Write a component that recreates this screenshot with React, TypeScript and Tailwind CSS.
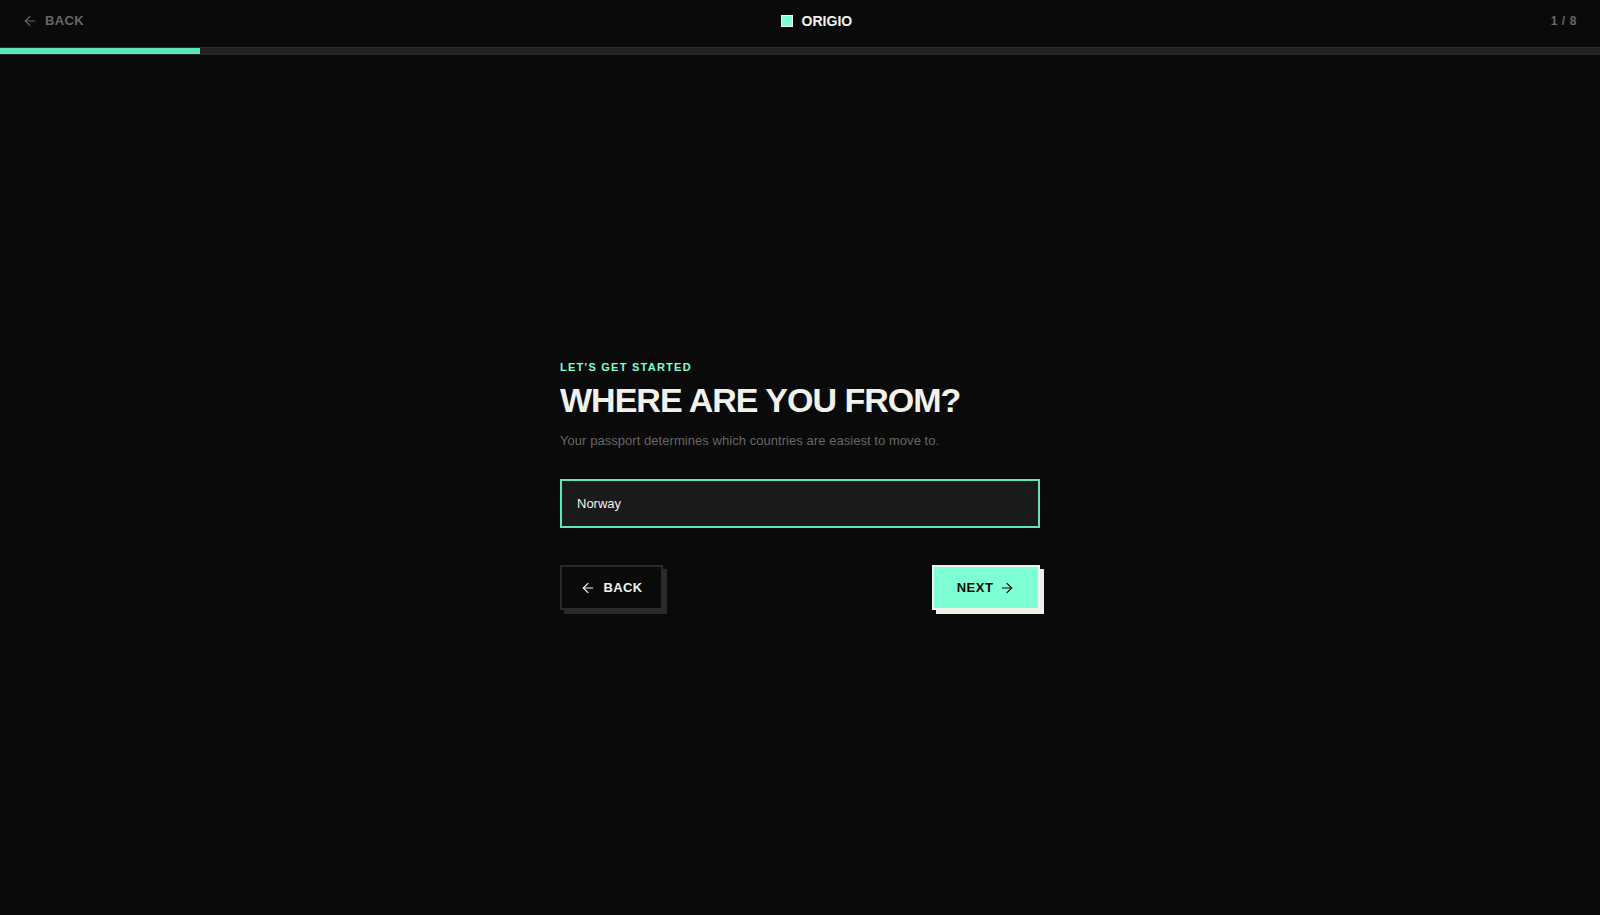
import React from 'react';
import { ArrowLeft, ArrowRight } from 'lucide-react';

const App: React.FC = () => {
  return (
    <div className="flex h-[915px] w-full flex-col bg-[#0a0a0a] font-['Liberation_Sans',Arial,sans-serif] text-[#f2f2ec]">
      <header className="flex h-[47px] shrink-0 items-center justify-between pb-[6px] pl-[22px] pr-[23px]">
        <button className="flex items-center gap-[7px] text-[13px] font-bold tracking-[0.4px] text-[#666666]">
          <ArrowLeft className="h-4 w-4" strokeWidth={1.75} />
          BACK
        </button>
        <div className="mr-[2px] flex items-center gap-[9px] text-sm font-bold">
          <span className="h-3 w-3 border border-[#f2f2ec] bg-[#7fffd4]" />
          ORIGIO
        </div>
        <span className="text-xs font-bold tracking-[0.6px] text-[#666666]">1 / 8</span>
      </header>

      <div className="h-[8px] shrink-0 border-y-[1.5px] border-[#2a2a2a] bg-[#222222]">
        <div className="h-full w-[200px] bg-[#5ce6bc]" />
      </div>

      <main className="flex flex-1 items-start justify-center pt-[304px]">
        <div className="w-[480px]">
          <p className="text-[11px] font-bold leading-4 tracking-[1.25px] text-[#7fffd4]">LET'S GET STARTED</p>
          <h1 className="mt-[5px] text-[34px] font-bold leading-10 tracking-[-1px]">WHERE ARE YOU FROM?</h1>
          <p className="mt-[11px] text-[13px] leading-5 tracking-[0.05px] text-[#666666]">
            Your passport determines which countries are easiest to move to.
          </p>

          <input
            readOnly
            value="Norway"
            className="mt-7 h-[49px] w-full border-2 border-[#5ce6bc] bg-[#1a1a1a] px-[15px] text-[13px] text-[#f2f2ec] outline-none"
          />

          <div className="mt-[37px] flex items-start justify-between">
            <button className="flex h-[45px] w-[103px] items-center justify-center gap-[7px] border-2 border-[#2a2a2a] bg-[#0a0a0a] text-[13px] font-bold tracking-[0.4px] shadow-[4px_4px_0_#2a2a2a]">
              <ArrowLeft className="h-4 w-4" strokeWidth={1.75} />
              BACK
            </button>
            <button className="flex h-[45px] w-[108px] items-center justify-center gap-[6px] border-2 border-[#f2f2ec] bg-[#7fffd4] text-[13px] font-bold tracking-[0.5px] text-[#0a0a0a] shadow-[4px_4px_0_#efefe9]">
              NEXT
              <ArrowRight className="h-4 w-4" strokeWidth={1.75} />
            </button>
          </div>
        </div>
      </main>
    </div>
  );
};

export default App;
